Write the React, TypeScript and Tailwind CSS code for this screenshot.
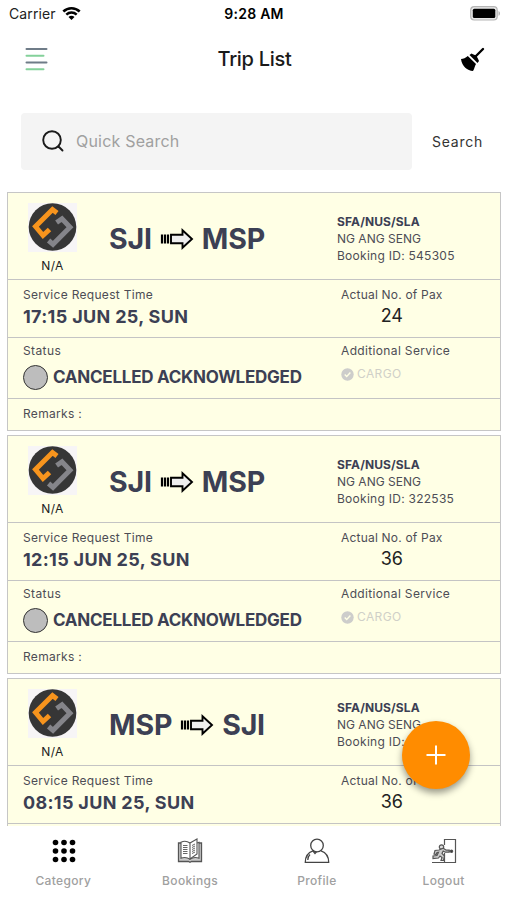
const trips = [
  { from: "SJI", to: "MSP", bookingId: "545305", time: "17:15 JUN 25, SUN", pax: 24, status: "CANCELLED ACKNOWLEDGED" },
  { from: "SJI", to: "MSP", bookingId: "322535", time: "12:15 JUN 25, SUN", pax: 36, status: "CANCELLED ACKNOWLEDGED" },
  { from: "MSP", to: "SJI", bookingId: "", time: "08:15 JUN 25, SUN", pax: 36, status: "" },
];

type Trip = (typeof trips)[number];

function Logo() {
  return (
    <svg width="49" height="49" viewBox="0 0 49 49" className="bg-[#f7f5f6]">
      <circle cx="24.5" cy="24" r="23.8" fill="#363636" />
      <g fill="none" strokeWidth="5">
        <path d="M29 10 24.5 6.500 7.500 23.500 15 32.500 21.500 26.500" stroke="#f7941d" />
        <path d="M28.600 19.500 34 15.800 42 24.300 25 41.300 20.600 37.500" stroke="#85858a" />
      </g>
    </svg>
  );
}

function RouteArrow() {
  return (
    <svg width="34" height="22" viewBox="0 0 34 22" fill="none" stroke="#000">
      <path d="M2 6.500v9M5 6.500v9M8 6.500v9" strokeWidth="2.200" />
      <path d="M11 6.800h11.500V2.200L32 11l-9.500 8.800v-4.600H11z" fill="#eee" strokeWidth="1.900" />
    </svg>
  );
}

function TripCard({ trip }: { trip: Trip }) {
  return (
    <div className="h-[239px] shrink-0 border-[1.5px] border-[#c6c6c6] bg-[#ffffe5] text-[#4d4d55]">
      {/* Route */}
      <div className="flex h-[87px] border-b border-[#c4c4c4]">
        <div className="flex w-[89px] flex-col items-center pt-[10px]">
          <Logo />
          <span className="mt-[6px] text-[12px] leading-4 tracking-[0.3px] text-[#222]">N/A</span>
        </div>
        <div className="flex w-[180px] items-center justify-center gap-[8px] pt-[6px] text-[28.5px] font-bold tracking-[-0.2px] text-[#3c4054]">
          <span>{trip.from}</span>
          <RouteArrow />
          <span>{trip.to}</span>
        </div>
        <div className="ml-[60px] whitespace-nowrap pt-[20px] text-[12px] leading-[17px]">
          <p className="font-bold tracking-[0.1px] text-[#3c4054]">SFA/NUS/SLA</p>
          <p>NG ANG SENG</p>
          <p className="tracking-[0.27px]">Booking ID: {trip.bookingId}</p>
        </div>
      </div>

      {/* Time and pax */}
      <div className="flex h-[58px] border-b border-[#c4c4c4] pl-[15px] pt-[6px]">
        <div className="w-[318px]">
          <p className="text-[12px] leading-[18px] tracking-[0.3px]">Service Request Time</p>
          <p className="text-[18px] font-bold leading-[26px] tracking-[0.33px] text-[#3c4054]">{trip.time}</p>
        </div>
        <div className="flex flex-col items-center">
          <p className="text-[12px] leading-[18px] tracking-[0.2px]">Actual No. of Pax</p>
          <p className="text-[18px] leading-[24px] text-[#222]">{trip.pax}</p>
        </div>
      </div>

      {/* Status */}
      {trip.status && (
        <div className="flex h-[61px] border-b border-[#c4c4c4] pl-[15px] pt-[4px]">
          <div className="w-[318px]">
            <p className="text-[12px] leading-[18px] tracking-[0.4px]">Status</p>
            <div className="mt-[5px] flex items-center gap-[5px]">
              <span className="size-[25px] rounded-full border-[1.5px] border-[#333] bg-[#bdbdbd]" />
              <span className="whitespace-nowrap text-[17px] font-bold tracking-[-0.25px] text-[#3c4054]">{trip.status}</span>
            </div>
          </div>
          <div>
            <p className="text-[12px] leading-[18px] tracking-[0.35px]">Additional Service</p>
            <div className="mt-[5px] flex items-center gap-[3px] text-[#d0d0c8]">
              <svg width="13" height="13" viewBox="0 0 13 13">
                <circle cx="6.500" cy="6.500" r="6.200" fill="#cdcdcb" />
                <path d="m3.700 6.600 2 2 3.700-4" fill="none" stroke="#ffffe5" strokeWidth="1.400" />
              </svg>
              <span className="text-[12px] leading-[18px] tracking-[0.4px]">CARGO</span>
            </div>
          </div>
        </div>
      )}

      {/* Remarks */}
      {trip.status && <p className="pl-[15px] pt-[6px] text-[12px] leading-[18px] tracking-[0.3px]">Remarks :</p>}
    </div>
  );
}

function CategoryIcon() {
  return (
    <svg width="26" height="24" viewBox="0 0 26 24">
      {[3.5, 12, 20.5].map((y) =>
        [5.500, 14, 22.500].map((x) => <circle key={`${x}-${y}`} cx={x} cy={y} r="2.800" />)
      )}
    </svg>
  );
}

function BookingsIcon() {
  return (
    <svg width="26" height="26" viewBox="0 0 26 26" fill="none" stroke="#555">
      <path d="M4 5H1.500v18.500h10l1.500.8 1.500-.8h10V5H22" fill="#c9c9c9" strokeWidth="1.300" />
      <path d="M13 5C10 3 6.500 3 4 4.200v16c3-1 6-1 9 1 3-2 6-2 9-1v-16L20 5z" fill="#fff" strokeWidth="1.100" />
      <path d="m13 5 7-4v15l-7 5z" fill="#fff" strokeWidth="1.100" />
      <path d="M6 7.500h4.500M6 9.500h4.500M6 11.500h4.500M6 13.500h4.500M6 15.500h4.500M15 7.500l3-1.500M15 9.500 18 8M15 11.500l3-1.500M15 13.500l3-1.500M15 15.500l3-1.500" strokeWidth=".9" />
    </svg>
  );
}

function ProfileIcon() {
  return (
    <svg width="26" height="26" viewBox="0 0 26 26" fill="none" stroke="#444" strokeWidth="1.300">
      <circle cx="13" cy="7.500" r="6.300" />
      <path d="M9 12.800C4 14.500 1.300 18.500 1.300 24.300h23.400C24.700 18.500 22 14.500 17 12.800M9 13l2 2.500 1.500-1.700M3.800 22c0-2.500.8-4.300 2.200-5.600" />
    </svg>
  );
}

function LogoutIcon() {
  return (
    <svg width="26" height="26" viewBox="0 0 26 26" fill="none" stroke="#555" strokeWidth="1.200">
      <path d="M13.500 7V1.500h11v23h-11V15M1 24.500h23.500M16 13.200h5" />
      <circle cx="20.500" cy="13.200" r="1.200" fill="#333" />
      <circle cx="10.500" cy="9" r="2.200" fill="#ddd" />
      <path d="m8 12-4 .5-1 3.500 2 .5 1-2 1.500-.3-1.500 3.300-4 .5v2.500l5.500-.5 1.500-2 2 1.500-1 3h2.500l1-4.500-2.500-2.500 1.200-2.500 2 1.200h4v-2h-3l-3-2z" fill="#ccc" />
    </svg>
  );
}

const tabs = [
  { label: "Category", icon: <CategoryIcon /> },
  { label: "Bookings", icon: <BookingsIcon /> },
  { label: "Profile", icon: <ProfileIcon /> },
  { label: "Logout", icon: <LogoutIcon /> },
];

export default function App() {
  return (
    <div className="relative flex h-[900px] w-[507px] flex-col overflow-hidden bg-white font-['Inter',sans-serif]">
      {/* Status bar */}
      <div className="grid h-[27px] shrink-0 grid-cols-3 items-center pl-[9px] pr-[8px] text-[14px] text-[#222]">
        <div className="flex items-center gap-[6px]">
          <span className="tracking-[0.1px]">Carrier</span>
          <svg width="19" height="15" viewBox="0 0 19 15" fill="none" stroke="#000" strokeWidth="2.500">
            <path d="M1.300 5.500c4.700-4.500 11.700-4.500 16.400 0M4.300 8.700c3-2.800 7.400-2.800 10.400 0" />
            <path d="m9.500 14-3-3c1.700-1.600 4.300-1.600 6 0z" fill="#000" stroke="none" />
          </svg>
        </div>
        <span className="text-center font-semibold tracking-[0.25px] text-black">9:28 AM</span>
        <svg width="31" height="15" viewBox="0 0 31 15" className="-mr-[2px] justify-self-end">
          <rect x=".7" y=".7" width="26.500" height="13.300" rx="3.500" fill="#e8e8e8" stroke="#b5b5b5" strokeWidth="1.200" />
          <rect x="2.800" y="2.800" width="22.500" height="9.200" rx="1.500" />
          <path d="M28.500 5c2 .8 2 4 0 4.800z" fill="#b5b5b5" />
        </svg>
      </div>

      {/* Header */}
      <div className="flex h-[64px] shrink-0 items-center justify-between pl-[25px] pr-[22px]">
        <svg width="24" height="24" viewBox="0 0 24 24" strokeWidth="2" strokeLinecap="round">
          <path d="M1.500 2h20M1.500 15.500h20" stroke="#6f7c88" />
          <path d="M1.500 8.800h17M1.500 22.300h17" stroke="#84d19a" />
        </svg>
        <h1 className="text-[20px] font-medium tracking-[-0.3px] text-[#1a1a1a]">Trip List</h1>
        <svg width="25" height="25" viewBox="0 0 25 25">
          <path d="M15.500 9.500 23 2" stroke="#000" strokeWidth="2.400" strokeLinecap="round" />
          <path d="m9.500 8 2-1.500c2 1 3.500 1.500 5 2.500 1 1.500 1.500 3 2.500 5L17.500 16z" />
          <path d="M1 12c2.500-.2 4.500-1 6.800-3l8.200 8c-1.200 2-1.500 4.500-3 7C7.500 23.500 2 19.500 1 12z" />
        </svg>
      </div>

      {/* Search */}
      <div className="mt-[22px] flex h-[57px] shrink-0 items-center pl-[21px]">
        <div className="flex h-full w-[391px] items-center gap-[12px] rounded-[4px] bg-[#f4f4f4] pb-px pl-[21px]">
          <svg width="22" height="22" viewBox="0 0 22 22" fill="none" stroke="#1a1a1a" strokeWidth="1.900" strokeLinecap="round">
            <circle cx="10" cy="10" r="8.800" />
            <path d="m16.500 16.500 4 4" />
          </svg>
          <span className="text-[16px] tracking-[0.2px] text-[#a0a0a0]">Quick Search</span>
        </div>
        <span className="ml-[20px] text-[14px] tracking-[0.75px] text-[#333]">Search</span>
      </div>

      {/* Trips */}
      <div className="mt-[22px] flex min-h-0 flex-1 flex-col gap-[4px] overflow-hidden pl-[7px] pr-[6px]">
        {trips.map((trip) => (
          <TripCard key={trip.time} trip={trip} />
        ))}
      </div>

      {/* Tab bar */}
      <div className="grid h-[74px] shrink-0 grid-cols-4 bg-white pt-[12px]">
        {tabs.map((tab) => (
          <div key={tab.label} className="flex flex-col items-center">
            <div className="flex h-[26px] items-center">{tab.icon}</div>
            <span className="mt-[8px] text-[12px] font-medium leading-[18px] tracking-[0.35px] text-[#a0a0a0]">{tab.label}</span>
          </div>
        ))}
      </div>

      {/* Add trip */}
      <button className="absolute left-[402px] top-[721px] flex size-[68px] items-center justify-center rounded-full bg-[#ff8c00] shadow-[0_4px_7px_rgba(0,0,0,0.4)]">
        <svg width="20" height="20" viewBox="0 0 20 20" stroke="#fff" strokeWidth="2">
          <path d="M10 .5v19M.5 10h19" />
        </svg>
      </button>
    </div>
  );
}
